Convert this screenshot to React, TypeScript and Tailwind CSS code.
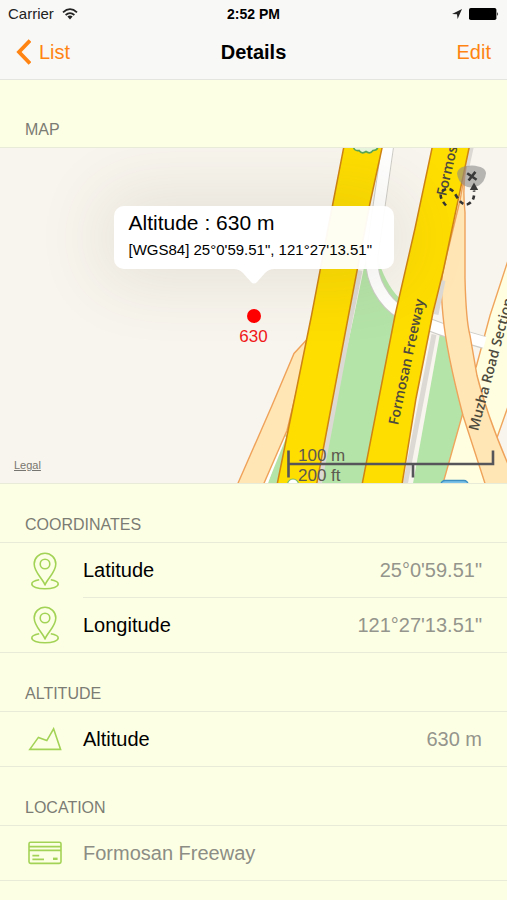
import React from "react";

const LINE = "border-[#e9ebd9]";

const WifiIcon = () => (
    <svg width="16" height="12" viewBox="0 0 16 12" fill="none" stroke="#222" strokeWidth="1.8" aria-hidden="true">
        <path d="M1 4.3 Q8 -2 15 4.3" />
        <path d="M3.6 7 Q8 3.2 12.4 7" />
        <path d="M5.4 8.6 Q8 6.6 10.6 8.6 L8 11.4 Z" fill="#222" stroke="none" />
    </svg>
);

const LocationArrow = () => (
    <svg width="12" height="12" viewBox="0 0 12 12" fill="#222" aria-hidden="true">
        <path d="M1 6 L11 1 L6.6 11 L6 6.2 Z" />
    </svg>
);

const Battery = () => (
    <svg width="30" height="12" viewBox="0 0 30 12" aria-hidden="true">
        <rect x="0" y="0" width="27.4" height="12" rx="1.8" fill="#000" />
        <path d="M28.2 4 Q30 6 28.2 8 Z" fill="#000" />
    </svg>
);

const PinIcon = () => (
    <svg width="30" height="38" viewBox="0 0 30 38" fill="none" stroke="#a3d356" strokeWidth="1.6" aria-hidden="true">
        <path d="M15 33 C13 27 4.2 20.5 4.2 12 A10.8 10.8 0 0 1 25.8 12 C25.8 20.5 17 27 15 33 Z" strokeLinejoin="round" />
        <circle cx="15" cy="12" r="4.8" />
        <path d="M9.2 27.8 C4.5 28.6 1.8 30.2 1.8 32 C1.8 34.8 7.5 36.7 15 36.7 C22.5 36.7 28.2 34.8 28.2 32 C28.2 30.2 25.5 28.6 20.8 27.8" />
    </svg>
);

const MountainIcon = () => (
    <svg width="34" height="24" viewBox="0 0 34 24" fill="none" stroke="#a3d356" strokeWidth="1.6" aria-hidden="true">
        <path d="M1.8 22.4 L10.4 10.4 L18.8 13.6 L25.6 1.8 L32.6 22.4 Z" />
    </svg>
);

const CardIcon = () => (
    <svg width="34" height="24" viewBox="0 0 34 24" fill="none" stroke="#a3d356" strokeWidth="1.6" aria-hidden="true">
        <rect x="1" y="1.2" width="32" height="21.2" rx="1.6" />
        <path d="M1 5.6 H33 M1 9.4 H33 M4.4 14.6 H11.2 M4.4 18.4 H16" />
        <path d="M25 17.8 H29.6" strokeWidth="2.4" />
    </svg>
);

type RowData = {
    id: string;
    icon: React.ReactNode;
    label: string;
    value?: string;
    muted?: boolean;
};

const sections: { id: string; title: string; rows: RowData[] }[] = [
    {
        id: "coordinates",
        title: "COORDINATES",
        rows: [
            { id: "lat", icon: <PinIcon />, label: "Latitude", value: "25°0'59.51\"" },
            { id: "lng", icon: <PinIcon />, label: "Longitude", value: "121°27'13.51\"" },
        ],
    },
    {
        id: "altitude",
        title: "ALTITUDE",
        rows: [{ id: "alt", icon: <MountainIcon />, label: "Altitude", value: "630 m" }],
    },
    {
        id: "location",
        title: "LOCATION",
        rows: [{ id: "loc", icon: <CardIcon />, label: "Formosan Freeway", muted: true }],
    },
];

const StatusBar = () => (
    <div className="grid grid-cols-3 items-center h-7 px-2 leading-5">
        <div className="flex items-center gap-2 text-[15px] text-[#222]">
            Carrier
            <WifiIcon />
        </div>
        <span className="text-center text-sm font-bold text-black">2:52 PM</span>
        <div className="flex items-center justify-end gap-1.5">
            <LocationArrow />
            <Battery />
        </div>
    </div>
);

const NavBar = () => (
    <nav className="grid grid-cols-3 items-center h-[51px] px-4 pb-1 text-xl">
        <a href="#list" className="flex items-center gap-2 text-[#ff8412]">
            <svg width="15" height="26" viewBox="0 0 15 26" fill="none" stroke="#ff8412" strokeWidth="3.8" aria-hidden="true">
                <path d="M14 1.6 L3 13 L14 24.4" />
            </svg>
            List
        </a>
        <h1 className="text-center font-bold text-black">Details</h1>
        <button type="button" className="justify-self-end text-[#ff8412]">Edit</button>
    </nav>
);

const MapDrawing = () => (
    <svg
        className="block w-full h-full"
        viewBox="0 147 507 336"
        preserveAspectRatio="xMidYMid slice"
        aria-hidden="true"
    >
        <rect x="-500" y="147" width="1507" height="336" fill="#f8f5ee" />

        {/* parks */}
        <path d="M365 262 L354 315 L318 483 H363 L397 315 L402 300 Q388 288 379 262 Z" fill="#b5e4a8" />
        <path d="M440 333 L413 483 H443 L466 412 L450 333 Z" fill="#b5e4a8" />
        <path d="M284 434 L268 483 H280 L290 434 Z" fill="#b5e4a8" />

        {/* muzha road */}
        <path d="M508 260 L490 315 L476 367 L463 412 L443 483 H487 L496 440 L508 406 Z" fill="#fffee0" />
        <path d="M508 260 L490 315 L476 367 M463 412 L443 483 M496 440 L508 406" fill="none" stroke="#f0a55c" strokeWidth="1.4" />

        {/* ramps */}
        <path d="M388 143 Q380 200 372 255 C370 280 384 302 402 313 Q440 330 484 342" fill="none" stroke="#cfcdc8" strokeWidth="13" />
        <path d="M388 143 Q380 200 372 255 C370 280 384 302 402 313 Q440 330 485 342" fill="none" stroke="#fff" strokeWidth="11" />
        <path d="M285 436 L266 483" stroke="#fff" strokeWidth="3" />

        {/* side roads */}
        <path
            d="M310 336 L306 340 L294 353 L272 405 L237 485 H263 L287 430 Z"
            fill="#ffe6b4"
            stroke="#efa25a"
            strokeWidth="1.4"
        />
        <path
            d="M467 160 Q462 185 465 212 V278 Q466 320 470 335 L477 375 Q487 415 509 466 V486 H486 L463 415 Q446 350 443 315 Q440 285 443 270 L460 200 Z"
            fill="#ffe6b4"
            stroke="#efa25a"
            strokeWidth="1.4"
        />

        {/* freeway */}
        <path d="M360 270 L351 315 L319 485" fill="none" stroke="#dcd9d4" strokeWidth="5" />
        <path d="M472 143 L467 166 M443 280 L436 314 M434 334 L405 485" fill="none" stroke="#dcd9d4" strokeWidth="5" />
        <path
            d="M344.5 143 L332.5 205 L311.5 315 L276.5 487 H316 L348.5 315 L369.5 205 L383 143 Z"
            fill="#fedd00"
            stroke="#cf8413"
            strokeWidth="1.5"
        />
        <path
            d="M433 143 L415 228 L395 315 L361.5 487 H401.5 L416 398 L433 312 L443.3 270 L470 143 Z"
            fill="#fedd00"
            stroke="#cf8413"
            strokeWidth="1.5"
        />

        {/* route badges */}
        <path d="M353 145 Q354 151 359 150 Q362 154 366 151 Q370 154 373 150 Q378 150 378 145" fill="#e8f6df" stroke="#5aa558" strokeWidth="1.6" />
        <circle cx="293" cy="484" r="5.5" fill="#fff" stroke="#7dbd6b" strokeWidth="1.2" />
        <rect x="441" y="480" width="27" height="14" rx="4" fill="#7cc3ea" stroke="#3c8fc0" strokeWidth="1.4" />

        {/* road names */}
        <g fill="#4d4a3d" fontFamily='"Open Sans", "Noto Sans", sans-serif' fontSize="14" fontWeight="600">
            <text transform="translate(398 425) rotate(-78)">Formosan Freeway</text>
            <text transform="translate(446 196) rotate(-77)">Formosan</text>
            <text transform="translate(478 431) rotate(-75)">Muzha Road Section</text>
        </g>

        {/* trail marker */}
        <path d="M457 173 Q458 165 472 165 Q486 166 486 173 Q485 181 479 185 Q471 189 464 185 Q458 181 457 173 Z" fill="#8a8a8a" fillOpacity="0.6" />
        <path d="M467.2 172.8 L476.6 179.2 M475.4 171.4 L468.6 180" stroke="#3a3a3a" strokeWidth="2.6" />
        <path d="M446 205 Q438 196 442 191 Q450 184 456 195 Q463 207 469 203 Q475 200 474 190" fill="none" stroke="#333" strokeWidth="2.6" strokeDasharray="4.5 3.5" />
        <path d="M474 182 L478.2 189.4 H469.8 Z" fill="#3a3a3a" />

        {/* scale */}
        <path d="M288.5 450 V477 M288.5 463.5 H493 V450 M413 463.5 V477" fill="none" stroke="#55555a" strokeWidth="2.6" />
        <g fill="#5d5a50" fontFamily='"Liberation Sans", Arial, sans-serif' fontSize="17">
            <text x="298" y="460">100 m</text>
            <text x="298" y="480">200 ft</text>
        </g>
    </svg>
);

const MapView = () => (
    <div className={`relative h-[337px] overflow-hidden border-y ${LINE}`}>
        <MapDrawing />
        <div className="absolute top-[58px] left-1/2 -translate-x-1/2 flex flex-col items-center">
            <div className="min-w-[280px] rounded-[10px] bg-white/95 px-[15px] py-0.5 h-[63px] whitespace-nowrap text-black shadow-[0_0_70px_10px_rgba(90,80,50,0.12)]">
                <p className="text-[21px] leading-[30px]">Altitude : 630 m</p>
                <p className="text-[15px] leading-6">[WGS84] 25°0'59.51", 121°27'13.51"</p>
            </div>
            <svg width="40" height="16" viewBox="0 0 40 16" fill="#fff" aria-hidden="true">
                <path d="M0 0 Q5 0 9 4 L17 13 Q20 16 23 13 L31 4 Q35 0 40 0 Z" />
            </svg>
            <span className="mt-6 size-3.5 rounded-full bg-[#fe0000]" />
            <span className="mt-0.5 text-[17px] leading-6 text-[#f01818]">630</span>
        </div>
        <a href="#legal" className="absolute bottom-2.5 left-3.5 text-[11px] leading-4 text-[#77756f] underline">Legal</a>
    </div>
);

const Row = ({ icon, label, value, muted, last }: Omit<RowData, "id"> & { last: boolean }) => (
    <li className="flex items-center gap-[18px] pl-[25px]">
        <span className="flex w-10 shrink-0 justify-center">{icon}</span>
        <div className={`flex flex-1 items-center justify-between pr-[25px] text-[20px] leading-[54px] ${last ? "" : `border-b ${LINE}`}`}>
            <span className={muted ? "text-[#8c8d84]" : "text-black"}>{label}</span>
            {value && <span className="text-[#94958c]">{value}</span>}
        </div>
    </li>
);

const App = () => {
    return (
        <div className='min-h-screen bg-[#fdffe5] font-["Liberation_Sans",Arial,sans-serif]'>
            <header className="border-b border-[#e4e5df] bg-[#f8f8f7]">
                <StatusBar />
                <NavBar />
            </header>
            <main>
                <section>
                    <h2 className="px-[25px] pt-[38px] pb-[5px] text-base leading-6 text-[#7b7c73]">MAP</h2>
                    <MapView />
                </section>
                {sections.map((section) => (
                    <section key={section.id}>
                        <h2 className="px-[25px] pt-[29px] pb-[5px] text-base leading-6 text-[#7b7c73]">{section.title}</h2>
                        <ul className={`border-y ${LINE}`}>
                            {section.rows.map((row, i) => (
                                <Row
                                    key={row.id}
                                    icon={row.icon}
                                    label={row.label}
                                    value={row.value}
                                    muted={row.muted}
                                    last={i === section.rows.length - 1}
                                />
                            ))}
                        </ul>
                    </section>
                ))}
            </main>
        </div>
    );
};

export default App;
